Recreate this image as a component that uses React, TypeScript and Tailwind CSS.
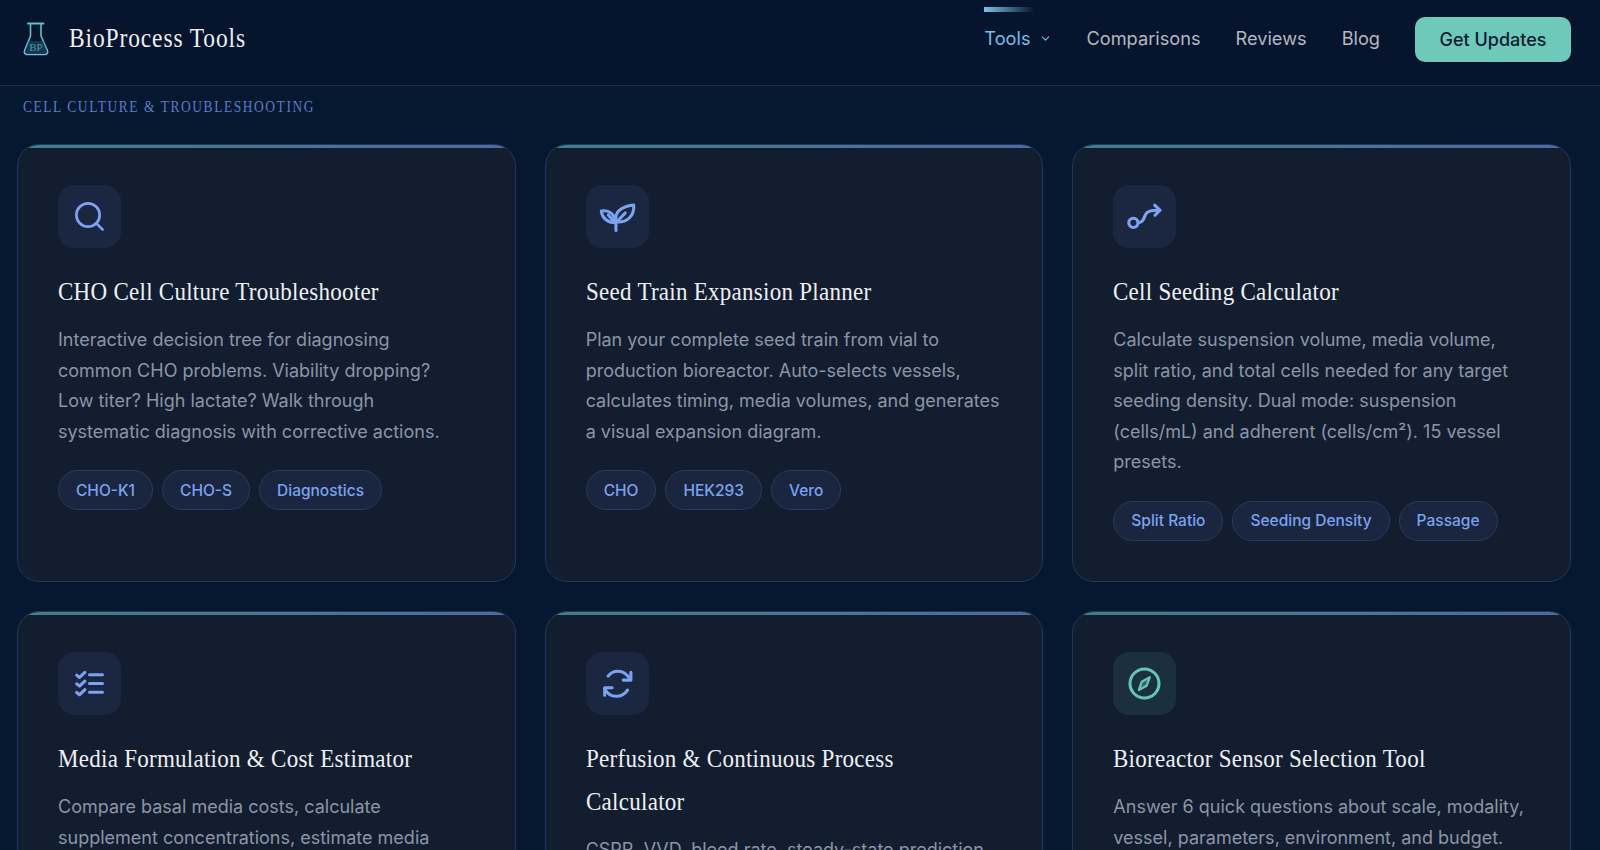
import { ChevronDown, Search } from 'lucide-react'
import type { ReactNode } from 'react'

function Glyph({ children }: { children: ReactNode }) {
  return (
    <svg className="w-[37px] h-[37px]" viewBox="0 0 24 24" fill="none" stroke="currentColor" strokeWidth={2} strokeLinecap="round" strokeLinejoin="round">
      {children}
    </svg>
  )
}

const Leaf = () => (
  <Glyph>
    <path d="M11 21v-5.5" />
    <path d="M11.3 15.5C9.5 10 13.5 5.6 22.5 4.6c.5 6.4-3.5 11.4-11.2 10.9Z" />
    <path d="M11.5 15.5 17 9.7" />
    <path d="M10.5 16C5.5 16 2 13 1.5 8.5c5-1 9 2 9 7.5Z" />
    <path d="M10 15.5 6 11" />
  </Glyph>
)

const RouteArrow = () => (
  <Glyph>
    <circle cx="4.8" cy="16.1" r="3" />
    <path d="M7.8 16c3.2 0 3.7-2.5 4.7-5 1-2.5 3.5-3.1 9.5-3.1" />
    <path d="M18.6 4.6 22 7.9l-3.2 3.3" />
  </Glyph>
)

const Checklist = () => (
  <Glyph>
    <path d="m3.7 6.6 1.8 1.5L9 4.8" />
    <path d="m3.7 12.2 1.8 1.5L9 10.4" />
    <path d="m3.7 17.8 1.8 1.5L9 16" />
    <path d="M12 6.3h8.4" />
    <path d="M12 12h8.4" />
    <path d="M12 17.7h8.4" />
  </Glyph>
)

const Cycle = () => (
  <Glyph>
    <path d="M5.9 7.2C7.4 5 9.8 4 12.4 4c3.4 0 6 2 7.8 5.4" />
    <path d="M20.7 4.8v5h-5" />
    <path d="M3.7 15.3c1.5 3.2 4.4 5 7.6 5 2.9 0 5.4-1.3 7.2-4" />
    <path d="M3.7 19.6v-4.8h4.8" />
  </Glyph>
)

const CompassMark = () => (
  <Glyph>
    <circle cx="12" cy="12" r="9.4" />
    <path d="M15.4 8 13.4 13.4 8.4 16.2 10.2 10.8Z" fill="currentColor" fillOpacity={0.35} strokeWidth={1.5} />
  </Glyph>
)

const tools = [
  {
    title: 'CHO Cell Culture Troubleshooter',
    text: 'Interactive decision tree for diagnosing\ncommon CHO problems. Viability dropping?\nLow titer? High lactate? Walk through\nsystematic diagnosis with corrective actions.',
    tags: ['CHO-K1', 'CHO-S', 'Diagnostics'],
    icon: <Search className="w-[35px] h-[35px]" strokeWidth={1.85} />,
  },
  {
    title: 'Seed Train Expansion Planner',
    text: 'Plan your complete seed train from vial to production bioreactor. Auto-selects vessels, calculates timing, media volumes, and generates a visual expansion diagram.',
    tags: ['CHO', 'HEK293', 'Vero'],
    icon: <Leaf />,
  },
  {
    title: 'Cell Seeding Calculator',
    text: 'Calculate suspension volume, media volume, split ratio, and total cells needed for any target seeding density. Dual mode: suspension (cells/mL) and adherent (cells/cm²). 15 vessel presets.',
    tags: ['Split Ratio', 'Seeding Density', 'Passage'],
    icon: <RouteArrow />,
  },
  {
    title: 'Media Formulation & Cost Estimator',
    text: 'Compare basal media costs, calculate supplement concentrations, estimate media',
    tags: [],
    icon: <Checklist />,
  },
  {
    title: 'Perfusion & Continuous Process Calculator',
    text: 'CSPR, VVD, bleed rate, steady-state prediction',
    tags: [],
    icon: <Cycle />,
  },
  {
    title: 'Bioreactor Sensor Selection Tool',
    text: 'Answer 6 quick questions about scale, modality, vessel, parameters, environment, and budget.',
    tags: [],
    icon: <CompassMark />,
    teal: true,
  },
]

function ToolCard({ tool }: { tool: (typeof tools)[number] }) {
  return (
    <div className="relative overflow-hidden rounded-[22px] border border-[#24375a] bg-[#131d30] p-10">
      <div className="absolute top-0 left-0 right-0 h-[3px] bg-gradient-to-r from-[#3f8085] to-[#4f6ba3]" />
      {tool.teal ? (
        <div className="w-[63px] h-[63px] rounded-2xl bg-[#1c2f3f] text-[#63c5b6] flex items-center justify-center">{tool.icon}</div>
      ) : (
        <div className="w-[63px] h-[63px] rounded-2xl bg-[#1b2740] text-[#7ba3ef] flex items-center justify-center">{tool.icon}</div>
      )}
      <h3 className="mt-[22px] mb-[12px] origin-left scale-x-[0.885] font-['Liberation_Serif',serif] text-[26px] leading-[43px] font-normal tracking-[0.3px] text-[#eef0f3]">
        {tool.title}
      </h3>
      <p className="whitespace-pre-line font-['Inter',sans-serif] text-[18px] leading-[30.6px] text-[#8b95a6]">{tool.text}</p>
      {tool.tags.length > 0 && (
        <div className="mt-[23px] flex gap-[9px]">
          {tool.tags.map((tag) => (
            <span key={tag} className="h-10 flex items-center rounded-full border border-[#2a3a5a] bg-[#1a2540] px-[17px] font-['Inter',sans-serif] text-[15.5px] font-medium text-[#7ba3ef]">
              {tag}
            </span>
          ))}
        </div>
      )}
    </div>
  )
}

export default function App() {
  return (
    <div className="h-[850px] overflow-hidden bg-[#05182f]">
      <header className="h-[86px] border-b border-[#1d2d4b] bg-[#06152d] pl-[23px] pr-[29px] pb-[8px] flex items-center justify-between">
        <div className="flex items-center gap-[20px]">
          <svg className="w-[26px] h-[34px]" viewBox="0 0 26 34" fill="none" strokeWidth={1.6} strokeLinecap="round" strokeLinejoin="round">
            <defs>
              <linearGradient id="flask" x1="0" y1="0" x2="0" y2="1">
                <stop offset="0" stopColor="#5cc4b4" />
                <stop offset="1" stopColor="#6bb8e0" />
              </linearGradient>
            </defs>
            <path d="M5 1.5h15.5" stroke="#5cc4b4" strokeWidth={2} />
            <path d="M7.5 2v12L1.6 28.5c-.8 2.2.4 4 2.6 4h17.6c2.2 0 3.4-1.8 2.6-4L18 14V2" stroke="url(#flask)" />
            <path d="M5 19h16l3 10-1.5 2.2h-19L2 29Z" fill="#2a6a78" fillOpacity={0.4} />
            <text x="13" y="29" textAnchor="middle" fontFamily="Liberation Serif, serif" fontSize="11" fill="#4f97b4">BP</text>
          </svg>
          <span className="origin-left scale-x-[0.87] font-['Liberation_Serif',serif] text-[27px] tracking-[1px] text-[#eef0f3]">BioProcess Tools</span>
        </div>
        <nav className="flex items-center font-['Inter',sans-serif] text-[18.2px] text-[#b4b8c0]">
          <a className="relative flex items-center gap-[8px] text-[#74bfe8]">
            <span className="absolute top-[-18px] left-0 w-[50px] h-[5px] bg-gradient-to-r from-[#7cc4e8] to-transparent" />
            Tools
            <ChevronDown size={13} />
          </a>
          <a className="ml-[35px]">Comparisons</a>
          <a className="ml-[35px]">Reviews</a>
          <a className="ml-[35px]">Blog</a>
          <button className="ml-[35px] h-[45px] w-[156px] mt-[2px] rounded-[10px] bg-[#6fc9bb] text-[18px] text-[#0b1b30] font-medium">Get Updates</button>
        </nav>
      </header>
      <div className="px-[23px] pt-[11px]">
        <span className="block origin-left scale-x-[0.79] whitespace-nowrap font-['Liberation_Serif',serif] text-[17px] leading-[19px] tracking-[2px] uppercase text-[#5a7cc8]">
          Cell Culture &amp; Troubleshooting
        </span>
      </div>
      <div className="mt-[28px] pl-[17px] pr-[29px] grid grid-cols-3 gap-x-[29px] gap-y-[29px]">
        {tools.map((tool) => (
          <ToolCard key={tool.title} tool={tool} />
        ))}
      </div>
    </div>
  )
}
